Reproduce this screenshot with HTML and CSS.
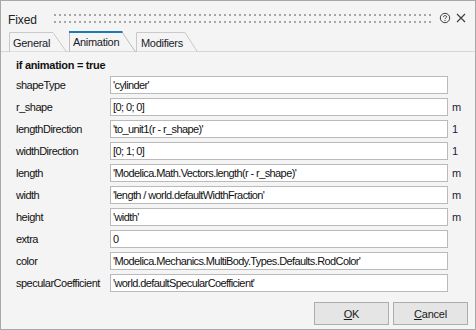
FILE: index.html
```html
<!DOCTYPE html>
<html lang="en">
<head>
    <meta charset="UTF-8">
    <link rel="stylesheet" href="styles.css">
    <title>Fixed</title>
</head>
<body>
    <section class="dialog">

        <div class="titlebar">
            <span class="title">Fixed</span>
            <svg class="grip" height="9">
                <defs>
                    <pattern id="dots" width="5" height="7" patternUnits="userSpaceOnUse">
                        <rect width="2" height="2" fill="#a6a6a6"/>
                    </pattern>
                </defs>
                <rect width="100%" height="9" fill="url(#dots)"/>
            </svg>
            <svg class="help" width="12" height="12" viewBox="0 0 12 12">
                <circle cx="6" cy="6" r="4.7" fill="none" stroke="#3c3c3c" stroke-width="1"/>
                <path d="M4.4 4.9 C4.4 3.2 7.6 3.2 7.6 4.8 C7.6 5.9 6 6 6 7.1" fill="none" stroke="#3c3c3c" stroke-width="1"/>
                <rect x="5.5" y="8" width="1" height="1" fill="#3c3c3c"/>
            </svg>
            <svg class="close" width="10" height="10" viewBox="0 0 10 10">
                <path d="M1 1 L9 9 M9 1 L1 9" stroke="#3c3c3c" stroke-width="1.1"/>
            </svg>
        </div>

        <div class="tabs">
            <div class="tab tab-general">
                <svg class="tabshape" width="58" height="20">
                    <polygon points="0.5,20 0.5,0.5 44,0.5 57.5,20" fill="#f4f4f4" stroke="#c9c9c9"/>
                </svg>
                <span>General</span>
            </div>
            <div class="tab tab-animation active">
                <svg class="tabshape" width="67" height="21">
                    <polygon points="0.5,21 0.5,1 53,1 66.5,21" fill="#f4f4f4" stroke="#bdbdbd"/>
                    <line x1="0" y1="1" x2="53.5" y2="1" stroke="#1a7bb3" stroke-width="2"/>
                </svg>
                <span>Animation</span>
            </div>
            <div class="tab tab-modifiers">
                <svg class="tabshape" width="62" height="20">
                    <polygon points="0.5,20 0.5,0.5 49,0.5 61.5,20" fill="#f4f4f4" stroke="#c9c9c9"/>
                </svg>
                <span>Modifiers</span>
            </div>
        </div>

        <div class="pane">
            <div class="group">if animation = true</div>
            <div class="params">
                <label>shapeType</label><div class="field">'cylinder'</div><span class="unit"></span>
                <label>r_shape</label><div class="field">[0; 0; 0]</div><span class="unit">m</span>
                <label>lengthDirection</label><div class="field">'to_unit1(r - r_shape)'</div><span class="unit">1</span>
                <label>widthDirection</label><div class="field">[0; 1; 0]</div><span class="unit">1</span>
                <label>length</label><div class="field">'Modelica.Math.Vectors.length(r - r_shape)'</div><span class="unit">m</span>
                <label>width</label><div class="field">'length / world.defaultWidthFraction'</div><span class="unit">m</span>
                <label>height</label><div class="field">'width'</div><span class="unit">m</span>
                <label>extra</label><div class="field">0</div><span class="unit"></span>
                <label>color</label><div class="field">'Modelica.Mechanics.MultiBody.Types.Defaults.RodColor'</div><span class="unit"></span>
                <label>specularCoefficient</label><div class="field">'world.defaultSpecularCoefficient'</div><span class="unit"></span>
            </div>
        </div>

        <div class="buttons">
            <button class="btn"><u>O</u>K</button>
            <button class="btn"><u>C</u>ancel</button>
        </div>

    </section>
</body>
</html>
```

FILE: styles.css
```css
* {
    font-family: "Liberation Sans", Arial, sans-serif;
}

html, body {
    margin: 0;
    padding: 0;
}

.dialog {
    width: 476px;
    height: 330px;
    box-sizing: border-box;

    display: flex;
    flex-direction: column;

    border: 1px solid #a8a8a8;
    background-color: #f4f4f4;

    font-size: 11px;
    letter-spacing: -0.5px;
    color: #111;
}

/* title bar */

.titlebar {
    height: 30px;

    display: flex;
    align-items: flex-start;

    padding: 0 9px 0 7px;
}

.title {
    margin-top: 12px;

    font-size: 12px;
    line-height: 14px;
    letter-spacing: -0.1px;
    color: #222;
}

.grip {
    flex: 1;

    margin: 13px 6px 0 17px;
}

.help {
    margin-top: 11px;
}

.close {
    margin: 12px 0 0 5px;
}

/* tabs */

.tabs {
    height: 20px;

    display: flex;
    align-items: flex-end;

    padding-left: 8px;

    border-bottom: 1px solid #d6d6d6;
}

.tab {
    position: relative;

    height: 20px;
    margin-bottom: -1px;

    box-sizing: border-box;
    padding-top: 5px;

    line-height: 12px;
    letter-spacing: -0.3px;
    color: #1a1a2a;
}

.tab span {
    position: relative;
}

.tabshape {
    position: absolute;
    left: 0;
    top: 0;
}

.tab-general {
    width: 58px;
    padding-left: 4px;
}

.tab-animation {
    width: 67px;
    height: 21px;
    margin-left: 2px;
    padding-left: 4px;
    padding-top: 5px;
}

.tab-modifiers {
    width: 62px;
    padding-left: 5px;
}

/* parameters */

.pane {
    flex: 1;

    padding: 6px 0 0 15px;
}

.group {
    height: 14px;
    margin-bottom: 4px;

    font-weight: bold;
    line-height: 14px;
    letter-spacing: -0.3px;
    color: #111;
}

.params {
    display: grid;
    grid-template-columns: 94px 338px auto;
    grid-auto-rows: 18px;
    row-gap: 4px;
    align-items: center;
}

.params label {
    line-height: 14px;
}

.field {
    height: 18px;
    box-sizing: border-box;

    padding-left: 2px;

    border: 1px solid #bababa;
    background-color: white;

    line-height: 16px;
    letter-spacing: -0.6px;
    white-space: nowrap;
    overflow: hidden;
}

.unit {
    padding-left: 4px;
    letter-spacing: 0;
    color: #1c1c3c;
}

/* buttons */

.buttons {
    display: flex;
    justify-content: flex-end;
    gap: 4px;

    padding: 0 7px 4px 0;
}

.btn {
    width: 75px;
    height: 23px;

    border: 1px solid #adadad;
    background-color: #e5e5e5;

    font-size: 11px;
    letter-spacing: -0.2px;
    color: #1a1a1a;
}
```
